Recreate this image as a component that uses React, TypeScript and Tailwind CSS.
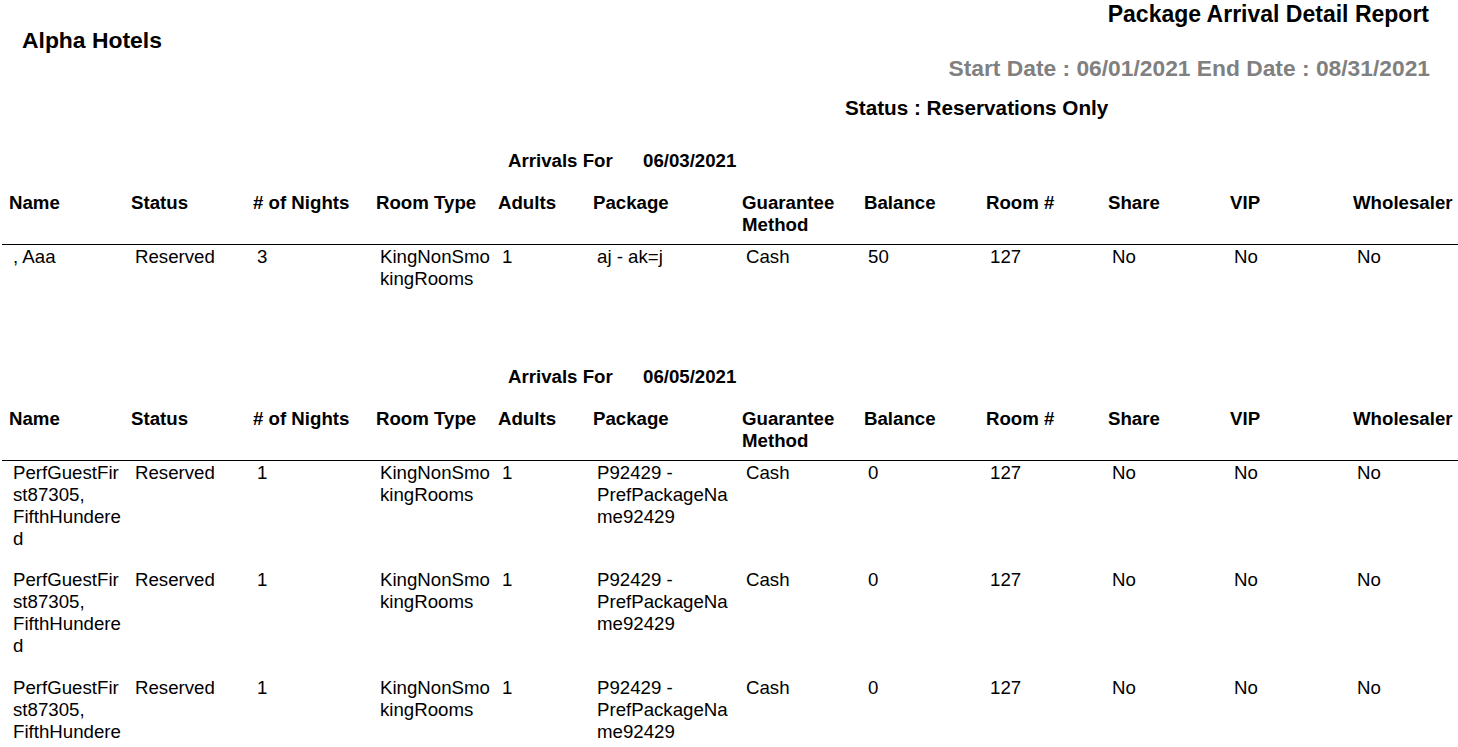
const columns: string[][] = [
  ['Name'],
  ['Status'],
  ['# of Nights'],
  ['Room Type'],
  ['Adults'],
  ['Package'],
  ['Guarantee', 'Method'],
  ['Balance'],
  ['Room #'],
  ['Share'],
  ['VIP'],
  ['Wholesaler'],
];

const perfRow: string[][] = [
  ['PerfGuestFir', 'st87305,', 'FifthHundere', 'd'],
  ['Reserved'],
  ['1'],
  ['KingNonSmo', 'kingRooms'],
  ['1'],
  ['P92429 -', 'PrefPackageNa', 'me92429'],
  ['Cash'],
  ['0'],
  ['127'],
  ['No'],
  ['No'],
  ['No'],
];

const sections = [
  {
    date: '06/03/2021',
    rows: [
      [
        [', Aaa'],
        ['Reserved'],
        ['3'],
        ['KingNonSmo', 'kingRooms'],
        ['1'],
        ['aj - ak=j'],
        ['Cash'],
        ['50'],
        ['127'],
        ['No'],
        ['No'],
        ['No'],
      ],
    ],
  },
  { date: '06/05/2021', rows: [perfRow, perfRow, perfRow] },
];

const grid =
  'grid grid-cols-[122px_122px_123px_122px_95px_149px_122px_122px_122px_122px_123px_1fr]';

function Lines({ lines }: { lines: string[] }) {
  return (
    <>
      {lines.map((l, i) => (
        <div key={i} className="whitespace-nowrap">
          {l}
        </div>
      ))}
    </>
  );
}

function Section({ date, rows, className }: { date: string; rows: string[][][]; className: string }) {
  return (
    <section className={className}>
      <div className="flex pl-[508px] font-bold">
        <span className="w-[135px]">Arrivals For</span>
        <span>{date}</span>
      </div>
      <div className={`${grid} ml-[2px] mt-[20px] border-b border-black pb-[8px] font-bold`}>
        {columns.map((c, i) => (
          <div key={i} className="pl-[7px]">
            <Lines lines={c} />
          </div>
        ))}
      </div>
      {rows.map((row, r) => (
        <div key={r} className={`${grid} ml-[2px] h-[107.5px] pt-[1px]`}>
          {row.map((cell, i) => (
            <div key={i} className="pl-[11px]">
              <Lines lines={cell} />
            </div>
          ))}
        </div>
      ))}
    </section>
  );
}

export default function App() {
  return (
    <div className="h-[747px] w-[1458px] overflow-hidden bg-white font-['Liberation_Sans',Arial,sans-serif] text-[18.67px] leading-[22px] text-black">
      <header className="flex justify-between">
        <h2 className="pl-[22px] pt-[27px] text-[22.9px] font-bold leading-[26px]">Alpha Hotels</h2>
        <div className="flex flex-col items-end pr-[29px] pt-[1px] font-bold leading-[26px]">
          <h1 className="text-[23px]">Package Arrival Detail Report</h1>
          <p className="-mr-[1px] mt-[28px] text-[22.8px] text-[#808080]">
            Start Date : 06/01/2021 End Date : 08/31/2021
          </p>
        </div>
      </header>
      <p className="mt-[15px] pl-[845px] text-[20.7px] font-bold leading-[24px]">Status : Reservations Only</p>
      <Section date={sections[0].date} rows={sections[0].rows} className="mt-[30px]" />
      <Section date={sections[1].date} rows={sections[1].rows} className="mt-[13px]" />
    </div>
  );
}
